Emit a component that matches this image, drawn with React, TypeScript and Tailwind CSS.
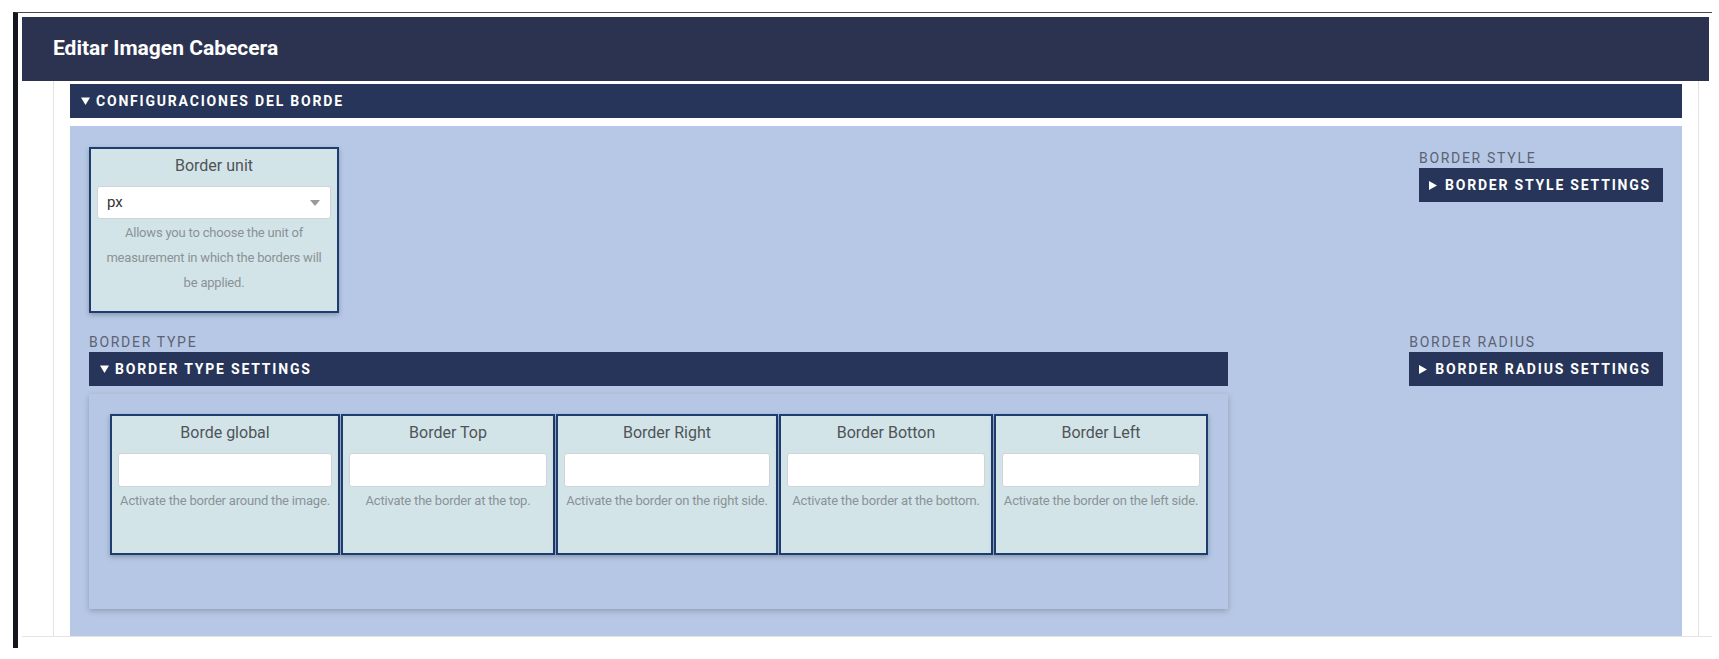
import React from "react";

type Field = { title: string; help: string; width: string };

const fields: Field[] = [
  { title: "Borde global", help: "Activate the border around the image.", width: "w-[230px]" },
  { title: "Border Top", help: "Activate the border at the top.", width: "w-[214px]" },
  { title: "Border Right", help: "Activate the border on the right side.", width: "w-[222px]" },
  { title: "Border Botton", help: "Activate the border at the bottom.", width: "w-[214px]" },
  { title: "Border Left", help: "Activate the border on the left side.", width: "w-[214px]" },
];

function Arrow({ open }: { open: boolean }) {
  return open ? (
    <svg width="9" height="8" viewBox="0 0 9 8" className="shrink-0">
      <path d="M0 0.5 L9 0.5 L4.5 8 Z" fill="white" />
    </svg>
  ) : (
    <svg width="8" height="9" viewBox="0 0 8 9" className="shrink-0">
      <path d="M0 0 L8 4.5 L0 9 Z" fill="white" />
    </svg>
  );
}

function Bar({ label, open, className = "" }: { label: string; open: boolean; className?: string }) {
  return (
    <div className={`flex h-[34px] items-center bg-[#263559] text-[14px] font-bold tracking-[1.8px] text-white ${className}`}>
      <Arrow open={open} />
      <span className={open ? "ml-[6px]" : "ml-[8px]"}>{label}</span>
    </div>
  );
}

function Label({ children }: { children: React.ReactNode }) {
  return <div className="text-[14px] leading-[19px] tracking-[1.7px] text-[#5b6272]">{children}</div>;
}

function FieldCard({ title, help, width }: Field) {
  return (
    <div className={`${width} min-h-[141px] shrink-0 border-2 border-[#1d3c70] bg-[#d2e4e8] px-[6px] pt-[4px] pb-[16px] shadow-[0_2px_5px_rgba(0,0,0,0.25)]`}>
      <div className="mb-[7px] text-center text-[16px] leading-[26px] text-[#4f5458]">{title}</div>
      <div className="h-[34px] w-full rounded-[3px] border border-[#d0d4d6] bg-white" />
      <div className="mt-[1px] whitespace-nowrap text-center text-[13px] leading-[25px] tracking-[-0.2px] text-[#8b9296]">{help}</div>
    </div>
  );
}

export default function App() {
  return (
    <div className="h-[659px] w-[1719px] overflow-hidden bg-white font-[Roboto,sans-serif]">
      <div className="ml-[13px] mt-[12px] flex h-[636px] w-[1699px] flex-col border-l-[5px] border-t border-l-[#15171f] border-t-[#4a4a4a] pl-[4px] pt-[4px]">
        {/* page title */}
        <div className="mr-[3px] flex h-[64px] shrink-0 items-center bg-[#2c3351] pl-[31px]">
          <h1 className="text-[21px] font-bold text-white">Editar Imagen Cabecera</h1>
        </div>

        <div className="h-[556px] shrink-0 border-b border-[#e4e4e4]">
          <div className="ml-[31px] mr-[13px] flex h-full flex-col border-x border-[#e3e3e3] px-[16px] pt-[3px]">
            <Bar label="CONFIGURACIONES DEL BORDE" open className="pl-[11px]" />

            <div className="mt-[8px] flex-1 bg-[#b7c8e6] px-[19px] pt-[21px]">
              <div className="flex justify-between">
                <div className="w-[250px] border-2 border-[#1d3c70] bg-[#d2e4e8] px-[6px] pt-[4px] pb-[16px] shadow-[0_2px_5px_rgba(0,0,0,0.25)]">
                  <div className="mb-[7px] text-center text-[16px] leading-[26px] text-[#4f5458]">Border unit</div>
                  <div className="flex h-[33px] items-center justify-between rounded-[3px] border border-[#d0d4d6] bg-white pl-[9px] pr-[10px]">
                    <span className="text-[15px] text-[#333]">px</span>
                    <svg width="10" height="6" viewBox="0 0 10 6">
                      <path d="M0 0 L10 0 L5 6 Z" fill="#9a9a9a" />
                    </svg>
                  </div>
                  <p className="mx-[5px] mt-[1px] text-center text-[13px] leading-[25px] tracking-[-0.2px] text-[#8b9296]">
                    Allows you to choose the unit of measurement in which the borders will be applied.
                  </p>
                </div>

                <div className="pt-[2px]">
                  <Label>BORDER STYLE</Label>
                  <Bar label="BORDER STYLE SETTINGS" open={false} className="pl-[10px] pr-[12px]" />
                </div>
              </div>

              <div className="mt-[20px] flex justify-between">
                <div className="w-[1139px]">
                  <Label>BORDER TYPE</Label>
                  <Bar label="BORDER TYPE SETTINGS" open className="pl-[11px]" />
                  <div className="mt-[8px] bg-[#b5c7e4] pl-[21px] pt-[20px] pb-[54px] shadow-[0_2px_6px_rgba(0,0,0,0.22)]">
                    <div className="flex gap-[1px]">
                      {fields.map((f) => (
                        <FieldCard key={f.title} {...f} />
                      ))}
                    </div>
                  </div>
                </div>

                <div>
                  <Label>BORDER RADIUS</Label>
                  <Bar label="BORDER RADIUS SETTINGS" open={false} className="pl-[10px] pr-[12px]" />
                </div>
              </div>
            </div>
          </div>
        </div>
      </div>
    </div>
  );
}
